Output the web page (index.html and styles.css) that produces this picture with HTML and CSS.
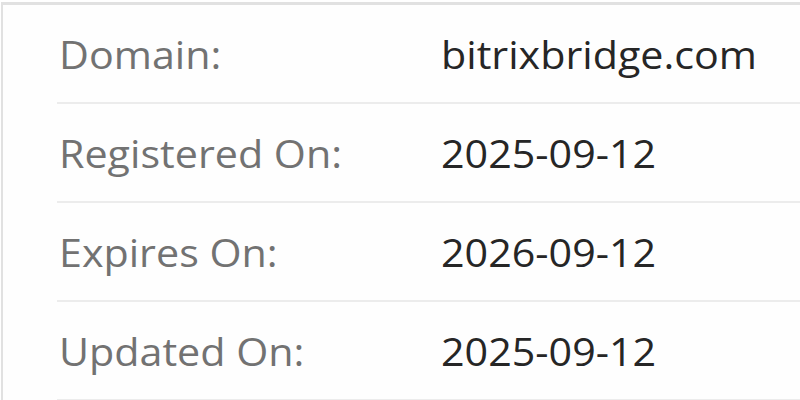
FILE: index.html
```html
<!DOCTYPE html>
<html>
<head>
<meta charset="utf-8">
<link rel="stylesheet" href="styles.css">
</head>
<body>
<div class="panel">
  <div class="info">
    <div class="row"><div class="label"><span class="txt">Domain:</span></div><div class="value"><span class="txt">bitrixbridge.com</span></div></div>
    <div class="row"><div class="label"><span class="txt">Registered On:</span></div><div class="value"><span class="txt">2025-09-12</span></div></div>
    <div class="row"><div class="label"><span class="txt">Expires On:</span></div><div class="value"><span class="txt">2026-09-12</span></div></div>
    <div class="row"><div class="label"><span class="txt">Updated On:</span></div><div class="value"><span class="txt">2025-09-12</span></div></div>
  </div>
</div>
</body>
</html>
```
FILE: styles.css
```css
html, body {
  margin: 0;
  padding: 0;
  background: #ffffff;
}
body {
  font-family: "Open Sans", "Liberation Sans", sans-serif;
  width: 800px;
  height: 400px;
  overflow: hidden;
}
.panel {
  margin-top: 2px;
  margin-left: 1px;
  border-top: 3px solid #e1e1e1;
  border-left: 2px solid #e1e1e1;
  background: #fefefe;
  height: 395px;
}
.info {
  padding-left: 54px;
}
.row {
  display: flex;
  align-items: center;
  height: 97px;
  border-bottom: 2px solid #ececec;
}
.label {
  width: 384px;
  flex: none;
  font-size: 38px;
  color: #727272;
  padding-left: 2px;
  box-sizing: border-box;
}
.value {
  font-size: 38px;
  color: #262626;
}
.txt {
  display: inline-block;
  transform: scaleX(1.085);
  transform-origin: left center;
  white-space: nowrap;
}
```
